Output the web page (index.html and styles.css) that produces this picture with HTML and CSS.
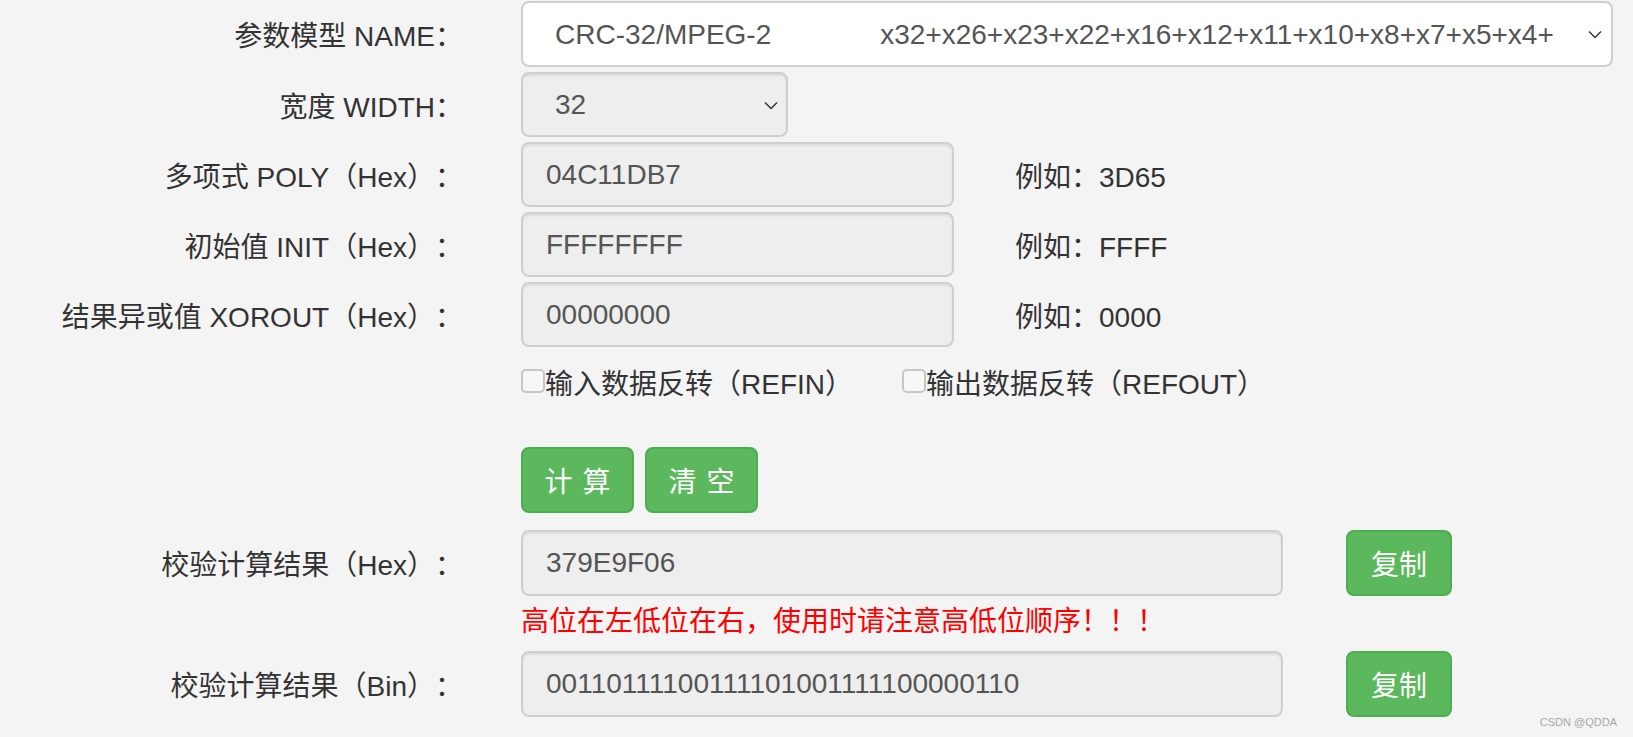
FILE: index.html
```html
<!DOCTYPE html>
<html lang="zh-CN">
<head>
  <meta charset="UTF-8"/>
  <meta name="viewport" content="width=device-width,initial-scale=1.0"/>
  <title>CRC 计算</title>
  <link rel="stylesheet" href="styles.css">
</head>
<body>

  <main class="crc-form">
    <div class="row">
      <label class="row-label" for="crc-model">参数模型 NAME：</label>
      <div class="field select-wrap select-name">
        <select id="crc-model" class="control select">
          <option>CRC-32/MPEG-2&nbsp;&nbsp;&nbsp;&nbsp;&nbsp;&nbsp;&nbsp;&nbsp;&nbsp;&nbsp;&nbsp;&nbsp;&nbsp;&nbsp;x32+x26+x23+x22+x16+x12+x11+x10+x8+x7+x5+x4+</option>
        </select>
        <svg class="chevron" width="14" height="9" viewBox="0 0 14 9"><path d="M1 1.5 L7 7.5 L13 1.5" fill="none" stroke="#333" stroke-width="1.5"/></svg>
      </div>
    </div>

    <div class="row">
      <label class="row-label" for="crc-width">宽度 WIDTH：</label>
      <div class="field select-wrap select-width">
        <select id="crc-width" class="control select">
          <option>32</option>
        </select>
        <svg class="chevron" width="14" height="9" viewBox="0 0 14 9"><path d="M1 1.5 L7 7.5 L13 1.5" fill="none" stroke="#333" stroke-width="1.5"/></svg>
      </div>
    </div>

    <div class="row">
      <label class="row-label" for="crc-poly">多项式 POLY（Hex）：</label>
      <div class="field">
        <input id="crc-poly" class="control input-hex" type="text" value="04C11DB7" readonly>
        <span class="hint">例如：3D65</span>
      </div>
    </div>

    <div class="row">
      <label class="row-label" for="crc-init">初始值 INIT（Hex）：</label>
      <div class="field">
        <input id="crc-init" class="control input-hex" type="text" value="FFFFFFFF" readonly>
        <span class="hint">例如：FFFF</span>
      </div>
    </div>

    <div class="row">
      <label class="row-label" for="crc-xorout">结果异或值 XOROUT（Hex）：</label>
      <div class="field">
        <input id="crc-xorout" class="control input-hex" type="text" value="00000000" readonly>
        <span class="hint">例如：0000</span>
      </div>
    </div>

    <div class="offset checks">
      <label class="check"><input type="checkbox">输入数据反转（REFIN）</label>
      <label class="check"><input type="checkbox">输出数据反转（REFOUT）</label>
    </div>

    <div class="offset actions">
      <button class="btn">计算</button>
      <button class="btn">清空</button>
    </div>

    <div class="row row-result">
      <label class="row-label" for="res-hex">校验计算结果（Hex）：</label>
      <div class="field">
        <input id="res-hex" class="control input-result" type="text" value="379E9F06" readonly>
        <button class="btn btn-copy">复制</button>
      </div>
    </div>

    <p class="offset note">高位在左低位在右，使用时请注意高低位顺序！！！</p>

    <div class="row row-bin">
      <label class="row-label" for="res-bin">校验计算结果（Bin）：</label>
      <div class="field">
        <input id="res-bin" class="control input-result" type="text" value="00110111100111101001111100000110" readonly>
        <button class="btn btn-copy">复制</button>
      </div>
    </div>
  </main>

  <div class="watermark">CSDN @QDDA</div>

</body>
</html>
```

FILE: styles.css
```css
* {
  box-sizing: border-box;
  margin: 0;
  padding: 0;
}
body {
  font-family: "Liberation Sans", "Noto Sans CJK SC", sans-serif;
  font-size: 28px;
  color: #333;
  background: #f4f4f4;
  min-height: 100vh;
  position: relative;
  overflow: hidden;
  text-spacing-trim: space-all;
}
.crc-form {
  padding-top: 1px;
}
.row {
  display: grid;
  grid-template-columns: 463px 1fr;
  column-gap: 58px;
  align-items: center;
  margin-bottom: 5px;
}
.row-label {
  text-align: right;
  white-space: nowrap;
}
.field {
  display: flex;
  align-items: center;
}
.control {
  height: 65px;
  border: 2px solid #cfcfcf;
  border-radius: 8px;
  background: #eee;
  box-shadow: inset 0 2px 2px rgba(0,0,0,0.075);
  font: inherit;
  color: #555;
  padding: 0 23px;
  outline: none;
}
.select-wrap {
  position: relative;
}
.select {
  appearance: none;
  -webkit-appearance: none;
  padding-left: 32px;
  white-space: pre;
}
.select-name .select {
  width: 1092px;
  height: 66px;
  background: #fff;
  box-shadow: none;
}
.select-width .select {
  width: 267px;
}
.chevron {
  position: absolute;
  top: 50%;
  margin-top: -4px;
  pointer-events: none;
}
.select-name .chevron {
  left: 1067px;
}
.select-width .chevron {
  left: 243px;
}
.input-hex {
  width: 433px;
}
.hint {
  margin-left: 61px;
}
.offset {
  margin-left: 521px;
}
.checks {
  display: flex;
  align-items: center;
  height: 32px;
  margin-top: 19px;
}
.check {
  display: inline-flex;
  align-items: center;
  white-space: nowrap;
}
.check + .check {
  margin-left: 49px;
}
.check input {
  appearance: none;
  -webkit-appearance: none;
  width: 24px;
  height: 24px;
  border: 2px solid #c6c6c6;
  border-radius: 5px;
  background: #f7f7f7;
  margin-top: -3px;
}
.actions {
  display: flex;
  gap: 11px;
  margin-top: 49px;
}
.btn {
  height: 66px;
  width: 113px;
  background: #5cb85c;
  border: 2px solid #4cae4c;
  border-radius: 8px;
  color: #fff;
  font: inherit;
  letter-spacing: 10px;
  padding-left: 10px;
  cursor: pointer;
}
.row-result {
  margin-top: 17px;
}
.row-result .control,
.row-bin .control {
  height: 66px;
}
.input-result {
  width: 762px;
}
.btn-copy {
  width: 106px;
  margin-left: 63px;
  letter-spacing: 0;
  padding-left: 0;
}
.note {
  color: #f00;
  line-height: 36px;
  margin-top: 8px;
}
.row-bin {
  margin-top: 11px;
}
.watermark {
  position: absolute;
  right: 16px;
  bottom: 9px;
  font-size: 11px;
  color: #a8a8a8;
}
```
